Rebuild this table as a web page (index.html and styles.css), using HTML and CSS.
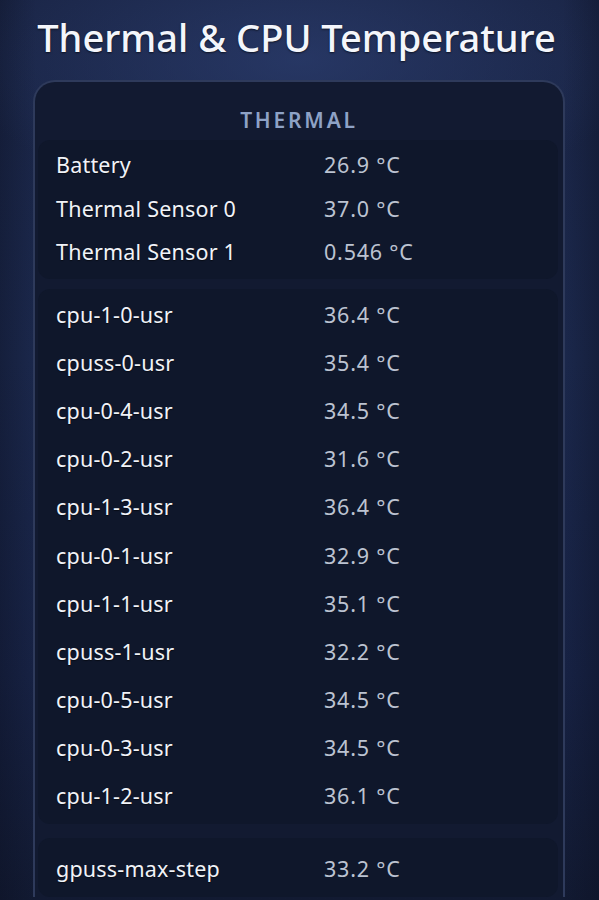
FILE: index.html
```html
<!DOCTYPE html>
<html lang="en">
<head>
<meta charset="utf-8">
<title>Thermal &amp; CPU Temperature</title>
<link rel="stylesheet" href="styles.css">
</head>
<body>
<main class="page">
  <h1 class="title">Thermal &amp; CPU Temperature</h1>
  <section class="card">
    <h2 class="card-title">THERMAL</h2>
    <div class="group group-thermal">
      <div class="row"><span class="label">Battery</span><span class="value">26.9 °C</span></div>
      <div class="row"><span class="label">Thermal Sensor 0</span><span class="value">37.0 °C</span></div>
      <div class="row"><span class="label">Thermal Sensor 1</span><span class="value">0.546 °C</span></div>
    </div>
    <div class="group group-cpu">
      <div class="row"><span class="label">cpu-1-0-usr</span><span class="value">36.4 °C</span></div>
      <div class="row"><span class="label">cpuss-0-usr</span><span class="value">35.4 °C</span></div>
      <div class="row"><span class="label">cpu-0-4-usr</span><span class="value">34.5 °C</span></div>
      <div class="row"><span class="label">cpu-0-2-usr</span><span class="value">31.6 °C</span></div>
      <div class="row"><span class="label">cpu-1-3-usr</span><span class="value">36.4 °C</span></div>
      <div class="row"><span class="label">cpu-0-1-usr</span><span class="value">32.9 °C</span></div>
      <div class="row"><span class="label">cpu-1-1-usr</span><span class="value">35.1 °C</span></div>
      <div class="row"><span class="label">cpuss-1-usr</span><span class="value">32.2 °C</span></div>
      <div class="row"><span class="label">cpu-0-5-usr</span><span class="value">34.5 °C</span></div>
      <div class="row"><span class="label">cpu-0-3-usr</span><span class="value">34.5 °C</span></div>
      <div class="row"><span class="label">cpu-1-2-usr</span><span class="value">36.1 °C</span></div>
    </div>
    <div class="group group-cpu group-gpu">
      <div class="row"><span class="label">gpuss-max-step</span><span class="value">33.2 °C</span></div>
    </div>
  </section>
</main>
</body>
</html>
```

FILE: styles.css
```css
html, body {
  margin: 0;
  padding: 0;
  height: 100%;
  overflow: hidden;
}

body {
  font-family: "Noto Sans", "Open Sans", sans-serif;
  color: #f1f3f8;
  background:
    radial-gradient(ellipse 340px 150px at 50% 60px, rgba(44, 62, 112, 0.7), rgba(44, 62, 112, 0) 100%),
    linear-gradient(90deg, rgba(10, 14, 30, 0.35) 0%, rgba(10, 14, 30, 0) 6%, rgba(10, 14, 30, 0) 94%, rgba(10, 14, 30, 0.35) 100%),
    linear-gradient(180deg, #1a2546 0%, #1b284c 40%, #172244 75%, #121a32 100%);
}

.page {
  display: flex;
  flex-direction: column;
  align-items: stretch;
}

.title {
  margin: 12px 0 0;
  height: 68px;
  padding-right: 6px;
  text-align: center;
  font-size: 38px;
  font-weight: 500;
  letter-spacing: 0;
  line-height: 50px;
  color: #f4f6fb;
  text-shadow: 0 1px 2px rgba(0, 0, 0, 0.6);
}

.card {
  margin: 0 34px 0 33px;
  border: 2px solid #2e3a5b;
  border-bottom: none;
  border-radius: 22px 22px 0 0;
  background: #121a31;
  padding: 0 5px 0 3px;
  display: flex;
  flex-direction: column;
  gap: 10px;
}

.card-title {
  margin: 0 0 -10px;
  height: 58px;
  padding-top: 18px;
  padding-left: 2px;
  box-sizing: border-box;
  display: flex;
  align-items: center;
  justify-content: center;
  font-size: 21px;
  font-weight: 600;
  letter-spacing: 2.8px;
  color: #8ea2c6;
}

.group {
  background: #0f172b;
  border-radius: 12px;
  padding: 3px 0 5px;
}

.group-cpu {
  padding: 2px 0 4px;
}

.group-gpu {
  margin-top: 4px;
  padding-top: 7px;
}

.row {
  display: flex;
  align-items: center;
  height: 43.5px;
  padding-left: 18px;
  font-size: 21.5px;
}

.group-cpu .row {
  height: 48.1px;
}

.label {
  width: 268px;
  color: #f1f3f8;
  letter-spacing: 0.2px;
  text-shadow: 0 1px 1px rgba(0, 0, 0, 0.5);
}

.value {
  color: #bcc3d1;
  letter-spacing: 0.8px;
}
```
